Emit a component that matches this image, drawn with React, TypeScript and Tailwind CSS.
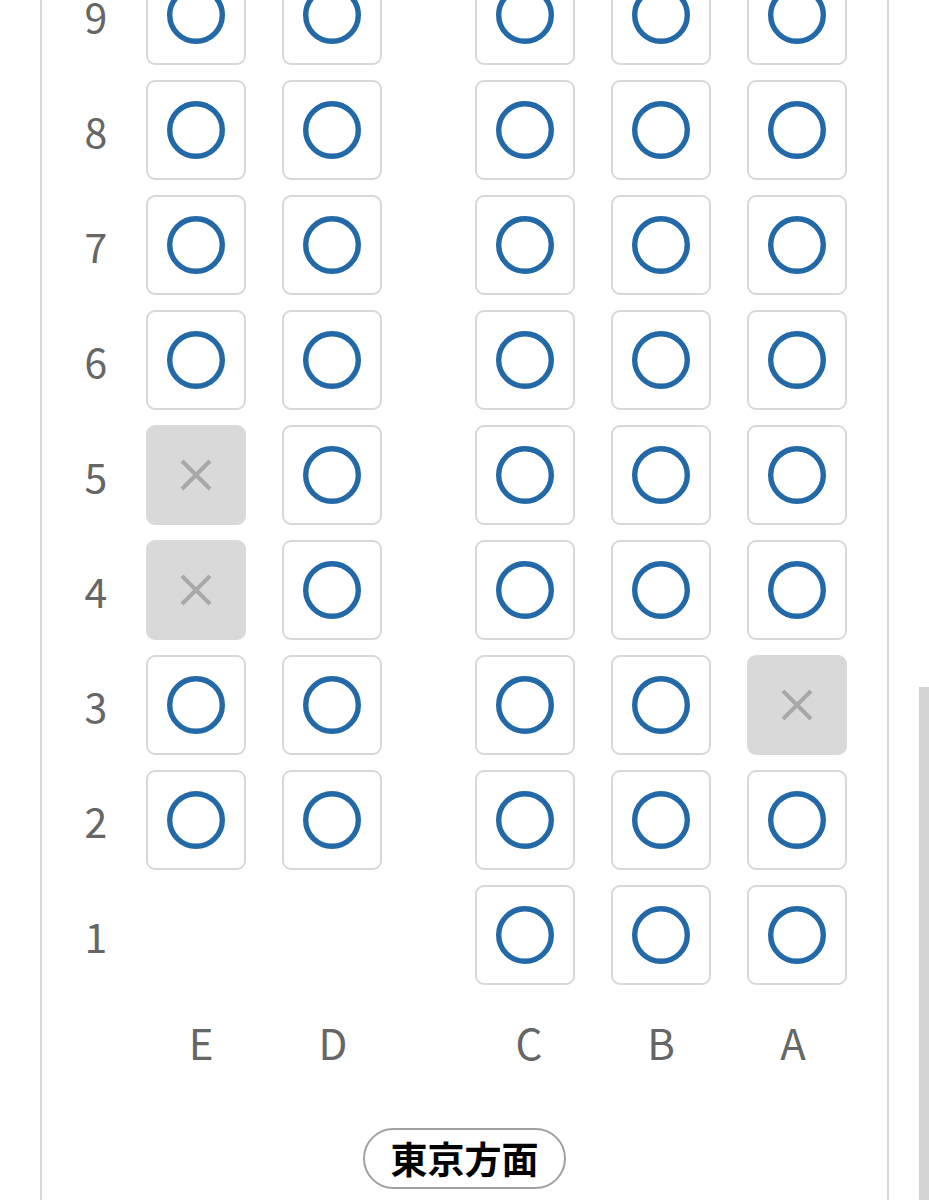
import React from "react";

type S = "o" | "x" | null;

const rows: { n: number; seats: S[] }[] = [
  { n: 9, seats: ["o", "o", "o", "o", "o"] },
  { n: 8, seats: ["o", "o", "o", "o", "o"] },
  { n: 7, seats: ["o", "o", "o", "o", "o"] },
  { n: 6, seats: ["o", "o", "o", "o", "o"] },
  { n: 5, seats: ["x", "o", "o", "o", "o"] },
  { n: 4, seats: ["x", "o", "o", "o", "o"] },
  { n: 3, seats: ["o", "o", "o", "o", "x"] },
  { n: 2, seats: ["o", "o", "o", "o", "o"] },
  { n: 1, seats: [null, null, "o", "o", "o"] },
];

const font = { fontFamily: '"Noto Sans CJK JP", "Noto Sans", sans-serif' };

function Seat({ s }: { s: S }) {
  if (s === null) return <div className="w-[100px] h-[100px] shrink-0" />;
  if (s === "x")
    return (
      <div className="w-[100px] h-[100px] shrink-0 rounded-[9px] bg-[#d9d9d9] flex items-center justify-center">
        <svg width="34" height="34" viewBox="0 0 34 34">
          <path d="M3 3 L31 31 M31 3 L3 31" stroke="#a8a8a8" strokeWidth="4" />
        </svg>
      </div>
    );
  return (
    <div className="w-[100px] h-[100px] shrink-0 rounded-[9px] border-2 border-[#d8d8d8] bg-white flex items-center justify-center">
      <svg width="60" height="60" viewBox="0 0 60 60">
        <circle cx="30" cy="30" r="26.3" fill="none" stroke="#2369a8" strokeWidth="5.4" />
      </svg>
    </div>
  );
}

export default function App() {
  return (
    <div className="relative w-[929px] h-[1200px] overflow-hidden bg-white" style={font}>
      <div className="ml-[40px] w-[849px] h-[1200px] border-x-2 border-[#d9d9d9] bg-white flex flex-col">
        <div className="-mt-[35px] flex flex-col gap-[15px]">
          {rows.map((r) => (
            <div key={r.n} className="flex items-center">
              <div className="w-[104px] pl-[4px] shrink-0 flex justify-center">
                <span className="text-[41px] leading-none text-[#666666]">{r.n}</span>
              </div>
              <div className="flex gap-[36px]">
                <Seat s={r.seats[0]} />
                <Seat s={r.seats[1]} />
              </div>
              <div className="w-[93px] shrink-0" />
              <div className="flex gap-[36px]">
                <Seat s={r.seats[2]} />
                <Seat s={r.seats[3]} />
                <Seat s={r.seats[4]} />
              </div>
            </div>
          ))}
        </div>
        <div className="mt-[36px] flex pl-[93px] text-[42px] leading-none text-[#666666]">
          <div className="w-[132px] flex justify-center">E</div>
          <div className="w-[132px] flex justify-center">D</div>
          <div className="w-[64px]" />
          <div className="w-[132px] flex justify-center">C</div>
          <div className="w-[132px] flex justify-center">B</div>
          <div className="w-[132px] flex justify-center">A</div>
        </div>
        <div className="mt-[65px] flex justify-center">
          <div className="w-[203px] h-[61px] rounded-full border-2 border-[#a0a0a0] flex items-center justify-center">
            <span className="text-[37px] font-bold leading-none text-black">東京方面</span>
          </div>
        </div>
      </div>
      <div className="absolute left-[919px] top-[687px] w-[10px] h-[513px] bg-[#d4d4d4]" />
    </div>
  );
}
